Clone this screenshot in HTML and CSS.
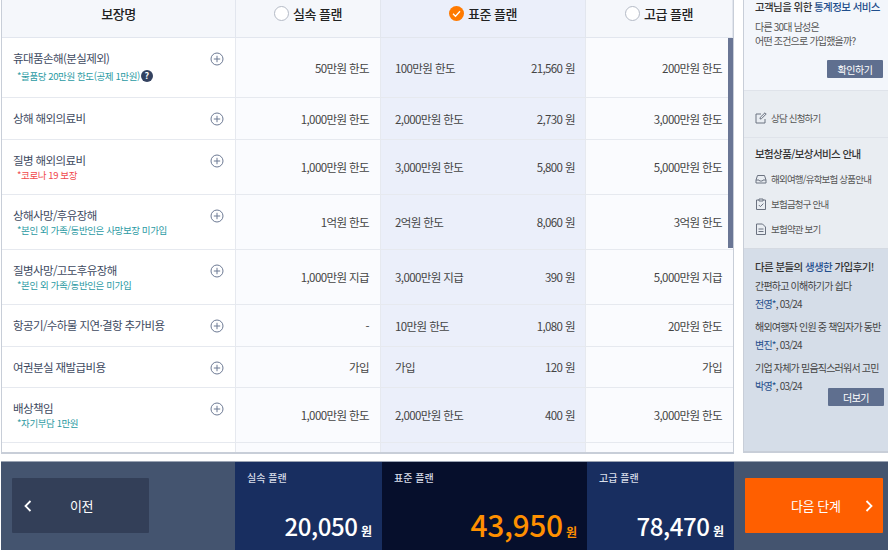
FILE: index.html
```html
<!DOCTYPE html>
<html lang="ko">

<head>
    <meta charset="UTF-8">
    <title>플랜 선택</title>
    <link rel="stylesheet" href="styles.css">
</head>

<body>
    <svg class="defs" width="0" height="0">
        <symbol id="plus" viewBox="0 0 14 14">
            <circle cx="7" cy="7" r="6" fill="none" stroke="#6d7a94" stroke-width="1"></circle>
            <path d="M7 3.800v6.400M3.800 7h6.400" stroke="#6d7a94" stroke-width="1"></path>
        </symbol>
    </svg>

    <div class="main">
        <div class="table-wrap">
            <div class="row head">
                <div class="cell name-head">보장명</div>
                <div class="cell plan-head"><span class="radio"></span>실속 플랜</div>
                <div class="cell plan-head std">
                    <svg class="check" viewBox="0 0 15 15" width="15" height="15">
                        <circle cx="7.500" cy="7.500" r="7.500" fill="#ff7a00"></circle>
                        <path d="M4 7.700l2.500 2.500L11 5.200" fill="none" stroke="#fff" stroke-width="1.300"></path>
                    </svg>표준 플랜
                </div>
                <div class="cell plan-head"><span class="radio"></span>고급 플랜</div>
            </div>

            <div class="row h60">
                <div class="cell name">
                    <div><p class="title">휴대품손해(분실제외)</p>
                        <p class="note spaced">*물품당 20만원 한도(공제 1만원)<span class="help">?</span></p></div>
                    <svg class="plus"><use href="#plus"></use></svg>
                </div>
                <div class="cell val">50만원 한도</div>
                <div class="cell std-val"><span>100만원 한도</span><span>21,560 원</span></div>
                <div class="cell val last">200만원 한도</div>
            </div>
            <div class="row h42">
                <div class="cell name">
                    <div><p class="title">상해 해외의료비</p></div>
                    <svg class="plus"><use href="#plus"></use></svg>
                </div>
                <div class="cell val">1,000만원 한도</div>
                <div class="cell std-val"><span>2,000만원 한도</span><span>2,730 원</span></div>
                <div class="cell val last">3,000만원 한도</div>
            </div>
            <div class="row h55">
                <div class="cell name">
                    <div><p class="title">질병 해외의료비</p>
                        <p class="note red">*코로나 19 보장</p></div>
                    <svg class="plus"><use href="#plus"></use></svg>
                </div>
                <div class="cell val">1,000만원 한도</div>
                <div class="cell std-val"><span>3,000만원 한도</span><span>5,800 원</span></div>
                <div class="cell val last">5,000만원 한도</div>
            </div>
            <div class="row h55">
                <div class="cell name">
                    <div><p class="title">상해사망/후유장해</p>
                        <p class="note">*본인 외 가족/동반인은 사망보장 미가입</p></div>
                    <svg class="plus"><use href="#plus"></use></svg>
                </div>
                <div class="cell val">1억원 한도</div>
                <div class="cell std-val"><span>2억원 한도</span><span>8,060 원</span></div>
                <div class="cell val last">3억원 한도</div>
            </div>
            <div class="row h55">
                <div class="cell name">
                    <div><p class="title">질병사망/고도후유장해</p>
                        <p class="note">*본인 외 가족/동반인은 미가입</p></div>
                    <svg class="plus"><use href="#plus"></use></svg>
                </div>
                <div class="cell val">1,000만원 지급</div>
                <div class="cell std-val"><span>3,000만원 지급</span><span>390 원</span></div>
                <div class="cell val last">5,000만원 지급</div>
            </div>
            <div class="row h42">
                <div class="cell name">
                    <div><p class="title">항공기/수하물 지연·결항 추가비용</p></div>
                    <svg class="plus"><use href="#plus"></use></svg>
                </div>
                <div class="cell val">-</div>
                <div class="cell std-val"><span>10만원 한도</span><span>1,080 원</span></div>
                <div class="cell val last">20만원 한도</div>
            </div>
            <div class="row h41">
                <div class="cell name">
                    <div><p class="title">여권분실 재발급비용</p></div>
                    <svg class="plus"><use href="#plus"></use></svg>
                </div>
                <div class="cell val">가입</div>
                <div class="cell std-val"><span>가입</span><span>120 원</span></div>
                <div class="cell val last">가입</div>
            </div>
            <div class="row h55">
                <div class="cell name">
                    <div><p class="title">배상책임</p>
                        <p class="note">*자기부담 1만원</p></div>
                    <svg class="plus"><use href="#plus"></use></svg>
                </div>
                <div class="cell val">1,000만원 한도</div>
                <div class="cell std-val"><span>2,000만원 한도</span><span>400 원</span></div>
                <div class="cell val last">3,000만원 한도</div>
            </div>
            <div class="row h10">
                <div class="cell name"></div>
                <div class="cell val"></div>
                <div class="cell std-val"></div>
                <div class="cell val last"></div>
            </div>
            <div class="scrollbar"></div>
        </div>

        <aside class="side">
            <section class="side-stat">
                <h3 class="side-title">고객님을 위한 <em>통계정보 서비스</em></h3>
                <p class="stat-text">다른 30대 남성은<br>어떤 조건으로 가입했을까?</p>
                <button class="side-btn">확인하기</button>
            </section>
            <section class="side-consult">
                <a class="side-link">
                    <svg viewBox="0 0 12 12" width="12" height="12"><path d="M10 7v4H1V2h5M5 7l.3-1.700L10 .8l1.200 1.200-4.700 4.700z" fill="none" stroke="#6b7280"></path></svg>
                    상담 신청하기
                </a>
            </section>
            <section class="side-guide">
                <h3 class="side-title">보험상품/보상서비스 안내</h3>
                <a class="side-link">
                    <svg viewBox="0 0 12 12" width="12" height="12"><path d="M1 7l1.500-4.500h7L11 7v3H1zM1 7h3l.7 1h2.600L8 7h3" fill="none" stroke="#6b7280"></path></svg>
                    해외여행/유학보험 상품안내
                </a>
                <a class="side-link">
                    <svg viewBox="0 0 12 12" width="12" height="12"><path d="M4 2H1.500v9.500h9V2H8M4 1h4v2H4zM3.800 7l1.600 1.600 3-3" fill="none" stroke="#6b7280"></path></svg>
                    보험금청구 안내
                </a>
                <a class="side-link">
                    <svg viewBox="0 0 12 12" width="12" height="12"><path d="M1.500 1h6l3 3v7.500h-9zM3.500 6h5M3.500 8.500h5" fill="none" stroke="#6b7280"></path></svg>
                    보험약관 보기
                </a>
            </section>
            <section class="side-review">
                <h3 class="side-title">다른 분들의 <em>생생한</em> 가입후기!</h3>
                <p class="review">간편하고 이해하기가 쉽다<br><em>전영*</em>, 03/24</p>
                <p class="review">해외여행자 인원 중 책임자가 동반<br><em>변진*</em>, 03/24</p>
                <p class="review">기업 자체가 믿음직스러워서 고민<br><em>박영*</em>, 03/24</p>
                <button class="side-btn more">더보기</button>
            </section>
        </aside>
    </div>

    <footer class="bottom">
        <div class="bottom-left">
            <button class="nav-btn prev">
                <svg viewBox="0 0 8 12" width="8" height="12"><path d="M6.500 1L1.500 6l5 5" fill="none" stroke="#fff" stroke-width="1.800"></path></svg>
                <span>이전</span>
            </button>
        </div>
        <div class="price-box">
            <p class="price-name">실속 플랜</p>
            <p class="price"><b>20,050</b> 원</p>
        </div>
        <div class="price-box selected">
            <p class="price-name">표준 플랜</p>
            <p class="price"><b>43,950</b> 원</p>
        </div>
        <div class="price-box">
            <p class="price-name">고급 플랜</p>
            <p class="price"><b>78,470</b> 원</p>
        </div>
        <div class="bottom-right">
            <button class="nav-btn next">
                <span>다음 단계</span>
                <svg viewBox="0 0 8 12" width="8" height="12"><path d="M1.500 1l5 5-5 5" fill="none" stroke="#fff" stroke-width="1.800"></path></svg>
            </button>
        </div>
    </footer>
</body>

</html>
```

FILE: styles.css
```css
* {
    box-sizing: border-box;
}

body {
    margin: 0;
    width: 888px;
    height: 550px;
    overflow: hidden;
    background: #fff;
    font-family: "Noto Sans CJK KR", "Noto Sans", sans-serif;
    color: #333;
}

p,
h3 {
    margin: 0;
}

em {
    font-style: normal;
}

.defs {
    position: absolute;
}

.main {
    display: flex;
    height: 461px;
    padding-left: 1px;
}

/* plan table */
.table-wrap {
    position: relative;
    width: 733px;
    height: 454px;
    border-left: 1px solid #c8ced8;
    border-right: 1px solid #c8ced8;
    border-bottom: 2px solid #c8ced8;
    overflow: hidden;
}

.row {
    display: grid;
    grid-template-columns: 234px 145px 205px 147px;
    border-bottom: 1px solid #e6e9ef;
}

.h60 { height: 60px; }
.h55 { height: 55px; }
.h42 { height: 42px; }
.h41 { height: 41px; }
.h10 { height: 9px; border-bottom: 0; }

.head {
    height: 38px;
    background: #f5f7fb;
    border-bottom: 1px solid #e2e6ee;
}

.cell {
    display: flex;
    align-items: center;
    font-size: 11.5px;
    letter-spacing: -0.6px;
    color: #444;
}

.name-head,
.plan-head {
    justify-content: center;
    font-size: 13px;
    font-weight: 500;
    letter-spacing: -0.5px;
    color: #222;
    padding-bottom: 10px;
    border-right: 1px solid #e2e6ee;
}

.plan-head.std {
    background: #ebeffa;
}

.radio {
    width: 15px;
    height: 15px;
    margin-right: 4px;
    border: 1px solid #b4bac6;
    border-radius: 50%;
    background: #fff;
}

.check {
    margin-right: 4px;
}

.name {
    justify-content: space-between;
    align-items: flex-start;
    padding: 12px 11px 0 11px;
    background: #fff;
    border-right: 1px solid #e6e9ef;
}

.title {
    font-size: 11.5px;
    line-height: 16px;
    color: #3e4a5f;
}

.note {
    font-size: 9.5px;
    letter-spacing: -0.4px;
    line-height: 14px;
    padding-left: 4px;
    color: #2b9aa3;
    display: flex;
    align-items: center;
}

.note.spaced {
    margin-top: 3px;
}

.note.red {
    color: #f0484c;
}

.help {
    width: 12px;
    height: 12px;
    margin-left: 1px;
    border-radius: 50%;
    background: #344260;
    color: #fff;
    font-size: 9px;
    font-weight: 700;
    letter-spacing: 0;
    line-height: 12px;
    text-align: center;
}

.plus {
    width: 14px;
    height: 14px;
    flex: none;
    margin-top: 2px;
}

.val {
    justify-content: flex-end;
    padding-right: 11px;
    background: #fafbfe;
    border-right: 1px solid #e6e9ef;
}

.val.last {
    padding-right: 11px;
    border-right: 0;
}

.std-val {
    justify-content: space-between;
    padding: 0 10px 0 14px;
    background: #ebeffa;
    border-right: 1px solid #e6e9ef;
}

.scrollbar {
    position: absolute;
    top: 38px;
    right: 0;
    width: 5px;
    height: 210px;
    background: #6a7695;
}

/* side column */
.side {
    width: 145px;
    height: 453px;
    margin-left: 9px;
    border-left: 1px solid #c8ced8;
    border-bottom: 2px solid #c8ced8;
    display: flex;
    flex-direction: column;
    font-size: 10px;
    letter-spacing: -0.8px;
}

.side-title {
    font-size: 10.5px;
    font-weight: 500;
    letter-spacing: -0.6px;
    line-height: 14px;
    color: #333;
    white-space: nowrap;
}

.side-title em {
    color: #1f4e8c;
}

.side-stat {
    height: 91px;
    padding: 0 0 0 11px;
    background: #f3f6fb;
    border-bottom: 1px solid #dfe3ea;
}

.stat-text {
    margin-top: 6px;
    line-height: 13.5px;
    color: #555;
    white-space: nowrap;
}

.side-btn {
    display: block;
    width: 56px;
    height: 18px;
    margin: 13px 5px 0 auto;
    padding: 0;
    border: 0;
    border-radius: 1px;
    background: #5f6f8f;
    color: #fff;
    font: 10px "Noto Sans CJK KR", sans-serif;
    letter-spacing: -0.5px;
}

.side-consult {
    height: 47px;
    padding: 20px 0 0 11px;
    background: #e9edf2;
    border-bottom: 1px solid #dfe3ea;
}

.side-guide {
    height: 111px;
    padding: 9px 0 0 11px;
    background: #e9edf2;
    border-bottom: 1px solid #d5dae2;
}

.side-link {
    display: flex;
    align-items: center;
    gap: 4px;
    height: 14px;
    color: #555;
    font-size: 9.5px;
    letter-spacing: -0.8px;
    white-space: nowrap;
}

.side-guide .side-link {
    margin-top: 11px;
}

.side-review {
    position: relative;
    flex: 1;
    padding: 11px 0 0 11px;
    background: #d5dde8;
}

.side-review .side-title {
    margin-bottom: 3px;
}

.review {
    margin-bottom: 5px;
    line-height: 18px;
    color: #444;
    white-space: nowrap;
}

.review em {
    color: #1f4e8c;
}

.side-btn.more {
    position: absolute;
    top: 139px;
    right: 4px;
    margin: 0;
}

/* price bar */
.bottom {
    display: flex;
    height: 89px;
    margin-left: 1px;
    background: #44546f;
    border-top: 1px solid #9aa3b3;
}

.bottom-left {
    width: 234px;
    padding: 16px 0 0 11px;
}

.bottom-right {
    flex: 1;
    padding: 16px 5px 0 11px;
}

.nav-btn {
    display: flex;
    align-items: center;
    justify-content: space-between;
    width: 100%;
    height: 55px;
    padding: 0 10px 0 12px;
    border: 0;
    border-radius: 1px;
    color: #fff;
    font: 13px "Noto Sans CJK KR", sans-serif;
    letter-spacing: -0.4px;
}

.prev {
    width: 137px;
    background: #333f58;
    gap: 38px;
    justify-content: flex-start;
}

.next {
    background: #ff5f00;
    padding-left: 46px;
}

.price-box {
    width: 147px;
    padding: 8px 10px 0 12px;
    background: #182e60;
    color: #fff;
}

.price-box.selected {
    width: 205px;
    background: #060f2c;
}

.price-box:last-of-type {
    width: 146px;
}

.price-name {
    font-size: 10px;
    font-weight: 500;
    line-height: 16px;
    color: #d9deea;
}

.price {
    margin-top: 18px;
    font-size: 12px;
    font-weight: 700;
    line-height: 44px;
    text-align: right;
}

.price b {
    font-size: 24px;
    font-weight: 500;
    letter-spacing: -0.4px;
}

.selected .price {
    margin-top: 15px;
    line-height: 46px;
    color: #ff9000;
}

.selected .price b {
    font-size: 30px;
}
```
